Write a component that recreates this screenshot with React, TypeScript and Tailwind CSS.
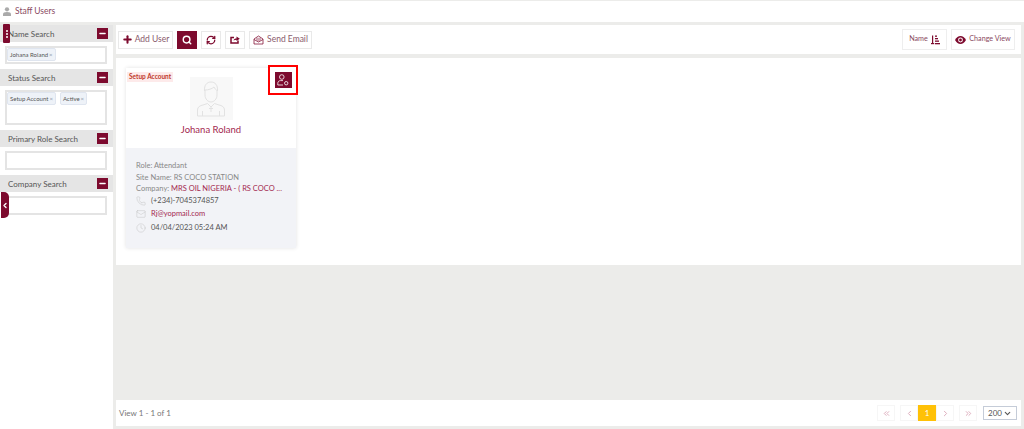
import React from "react";
import {
  ChevronDown,
  ChevronLeft,
  ChevronRight,
  ChevronsLeft,
  ChevronsRight,
  Clock,
  Mail,
  Minus,
  Phone,
  Plus,
  RefreshCw,
  Search,
} from "lucide-react";

const maroon = "text-[#7d0a2e]";

function Chip({ label }: { label: string }) {
  return (
    <span className="flex h-[13px] items-center gap-[1px] rounded-[2px] border border-[#dfe5ef] bg-[#eef2f8] px-[2px] text-[6px] text-[#555]">
      {label}
      <span className="text-[#8a94a6]">×</span>
    </span>
  );
}

function SearchGroup({
  title,
  boxClass,
  children,
}: {
  title: string;
  boxClass: string;
  children?: React.ReactNode;
}) {
  return (
    <div className="mb-[5px]">
      <div className="flex h-[17px] items-center justify-between bg-[#e5e5e5] pl-[8px] pr-[5px] text-[8px] text-[#555]">
        {title}
        <span className="flex h-[11px] w-[11px] items-center justify-center bg-[#7d0a2e]">
          <Minus size={9} strokeWidth={3.5} className="text-white" />
        </span>
      </div>
      <div className="pl-[5px] pr-[6px] pt-[4px]">
        <div
          className={`flex flex-wrap items-start gap-[4px] border-2 border-[#e4e4e4] bg-white p-[0px] ${boxClass}`}
        >
          {children}
        </div>
      </div>
    </div>
  );
}

function ToolButton({
  children,
  active,
  className = "",
}: {
  children: React.ReactNode;
  active?: boolean;
  className?: string;
}) {
  return (
    <div
      className={`flex h-[18px] items-center justify-center gap-[2px] border text-[8.5px] ${className} ${
        active
          ? "border-[#7d0a2e] bg-[#7d0a2e] text-white"
          : "border-[#e9e9e9] bg-white text-[#7d0a2e]"
      }`}
    >
      {children}
    </div>
  );
}

function PageButton({ children }: { children: React.ReactNode }) {
  return (
    <span className="flex h-[16px] w-[18px] items-center justify-center border border-[#f6f6f6] text-[#dba9b9]">
      {children}
    </span>
  );
}

function ShareBoxIcon() {
  return (
    <svg width="10" height="9" viewBox="0 0 10 9" fill="none">
      <path d="M4 2.5H1V8H8V5.5" stroke="currentColor" strokeWidth="1.5" />
      <path d="M3.5 5.5C4 4 5 3.5 6.5 3.5V1.5L9.8 3.8L6.5 6V4.8C5.5 4.8 4.5 5 3.5 5.5Z" fill="currentColor" />
    </svg>
  );
}

function EnvelopeIcon() {
  return (
    <svg width="11" height="10" viewBox="0 0 11 10" fill="none">
      <path d="M1 4L5.5 1L10 4V9H1V4Z" stroke="currentColor" strokeOpacity="0.75" />
      <path d="M1 4.5L5.5 7L10 4.5" stroke="currentColor" strokeOpacity="0.75" />
      <path d="M3 2.8H8V5L5.5 6.4L3 5Z" fill="currentColor" fillOpacity="0.35" />
    </svg>
  );
}

function SortIcon() {
  return (
    <svg width="9" height="10" viewBox="0 0 9 10" fill="currentColor">
      <rect x="1" y="0.5" width="1.2" height="8.5" />
      <rect x="0" y="8" width="3.2" height="1.2" />
      <rect x="4" y="0.5" width="2" height="1.3" />
      <rect x="4" y="3" width="3" height="1.3" />
      <rect x="4" y="5.5" width="4" height="1.3" />
      <rect x="4" y="8" width="5" height="1.3" />
    </svg>
  );
}

function EyeIcon() {
  return (
    <svg width="11" height="8" viewBox="0 0 11 8" className={maroon}>
      <path d="M0 4C1.5 1.4 3.4 0 5.5 0S9.5 1.4 11 4C9.5 6.6 7.6 8 5.5 8S1.5 6.6 0 4Z" fill="currentColor" />
      <circle cx="5.5" cy="4" r="2.4" fill="white" />
      <circle cx="5.5" cy="4" r="1.4" fill="currentColor" />
    </svg>
  );
}

function UserGearIcon() {
  return (
    <svg width="12" height="12" viewBox="0 0 12 12" fill="none" stroke="white" strokeWidth="0.8">
      <circle cx="4.8" cy="3" r="2.3" />
      <path d="M0.8 11V9.4C0.8 7.6 2 6.6 3.6 6.6H6" />
      <path d="M0.8 11H6" />
      <circle cx="9.2" cy="9.2" r="1.7" />
    </svg>
  );
}

function AvatarIcon() {
  return (
    <svg width="30" height="36" viewBox="0 0 30 36" fill="none" stroke="#e2e2e2" strokeWidth="1">
      <path d="M8.5 10C8 4 11 1 15 1S22 4 21.5 10" />
      <path d="M9 9C12 9 16 8 18 6C19 8 20 9 21 9.5V14C21 18 18 21 15 21S9 18 9 14V9Z" />
      <path d="M1.5 35V29C1.5 26 4 24.5 7 24L11.5 22.5L15 26L18.5 22.5L23 24C26 24.5 28.5 26 28.5 29V35Z" />
      <path d="M15 26V31M13 27.5H17M6.5 30V35M23.5 30V35" />
    </svg>
  );
}

export default function App() {
  return (
    <div
      className="relative flex h-[429px] w-[1024px] flex-col overflow-hidden bg-[#ececea] text-[#666]"
      style={{ fontFamily: "Lato, sans-serif" }}
    >
      {/* page title */}
      <div className="mt-px flex h-[21px] shrink-0 items-center gap-[4px] bg-white pl-[3px] text-[8.5px] text-[#8a4a62]">
        <svg width="8" height="9" viewBox="0 0 9 10" fill="#aaa">
          <circle cx="4.5" cy="2.6" r="2.4" />
          <path d="M0 10V8C0 6.5 1.5 5.6 4.5 5.6S9 6.5 9 8V10Z" />
        </svg>
        Staff Users
      </div>

      <div className="mt-[3px] flex min-h-0 flex-1 gap-[3px]">
        {/* filters */}
        <aside className="flex w-[113px] shrink-0 flex-col bg-white">
          <SearchGroup title="Name Search" boxClass="h-[18px]">
            <Chip label="Johana Roland" />
          </SearchGroup>
          <SearchGroup title="Status Search" boxClass="h-[35px]">
            <Chip label="Setup Account" />
            <Chip label="Active" />
          </SearchGroup>
          <SearchGroup title="Primary Role Search" boxClass="h-[19px]" />
          <SearchGroup title="Company Search" boxClass="h-[19px]" />
        </aside>

        <main className="flex min-w-0 flex-1 flex-col pr-[3px]">
          {/* toolbar */}
          <div className="flex h-[29px] shrink-0 items-center justify-between bg-white pl-[2px] pr-[6px]">
            <div className="flex items-center gap-[4px]">
              <ToolButton className="w-[55px]">
                <Plus size={11} strokeWidth={4.5} className="shrink-0" />
                <span className="text-[#8a5a6c]">Add User</span>
              </ToolButton>
              <ToolButton active className="w-[20px]">
                <Search size={10} strokeWidth={3.5} />
              </ToolButton>
              <ToolButton className="w-[20px]">
                <RefreshCw size={10} strokeWidth={3} />
              </ToolButton>
              <ToolButton className="w-[20px]">
                <ShareBoxIcon />
              </ToolButton>
              <ToolButton className="w-[63px] gap-[3px]">
                <EnvelopeIcon />
                <span className="text-[#8a5a6c]">Send Email</span>
              </ToolButton>
            </div>
            <div className="flex items-center gap-[4px] text-[7.2px] text-[#8a4a62]">
              <span className="flex h-[21px] w-[45px] items-center justify-center gap-[3px] border border-[#eee]">
                Name
                <span className={maroon}>
                  <SortIcon />
                </span>
              </span>
              <span className="flex h-[21px] w-[64px] items-center justify-center gap-[3px] border border-[#eee]">
                <EyeIcon />
                Change View
              </span>
            </div>
          </div>

          {/* card area */}
          <div className="mt-[4px] flex h-[207px] shrink-0 bg-white pl-[10px] pt-[10px]">
            <div className="flex h-[180px] w-[170px] flex-col shadow-[0_0_4px_rgba(0,0,0,0.12)]">
              <div className="relative flex h-[80px] shrink-0 flex-col items-center">
                <span className="absolute left-[1px] top-[4px] bg-[#fdeaea] px-[2px] text-[6.5px] font-bold leading-[10px] text-[#c0392b]">
                  Setup Account
                </span>
                <div className="absolute right-[-2px] top-[-3px] flex h-[30px] w-[30px] items-center justify-center border-2 border-[#ff0000] bg-white">
                  <span className="flex h-[16px] w-[17px] items-center justify-center bg-[#7d0a2e]">
                    <UserGearIcon />
                  </span>
                </div>
                <div className="mt-[9px] flex h-[43px] w-[43px] items-center justify-center bg-[#f8f8f8]">
                  <AvatarIcon />
                </div>
                <span className="mt-[3px] text-[9.5px] leading-[14px] text-[#a3284f]">
                  Johana Roland
                </span>
              </div>
              <div className="flex flex-1 flex-col bg-[#f2f3f7] px-[10px] pt-[12px] text-[7.5px] leading-[11.5px] text-[#888]">
                <div>Role: Attendant</div>
                <div>Site Name: RS COCO STATION</div>
                <div className="whitespace-nowrap">
                  Company:{" "}
                  <span className="text-[#a3284f]">
                    MRS OIL NIGERIA - ( RS COCO ...
                  </span>
                </div>
                <div className="flex h-[12px] items-center gap-[5px] text-[#555]">
                  <Phone size={10} strokeWidth={1} className="text-[#bbb]" />
                  (+234)-7045374857
                </div>
                <div className="mt-[1px] flex h-[13px] items-center gap-[5px] text-[#a3284f]">
                  <Mail size={10} strokeWidth={1} className="text-[#bbb]" />
                  Rj@yopmail.com
                </div>
                <div className="mt-[1px] flex h-[13px] items-center gap-[5px] text-[#555]">
                  <Clock size={10} strokeWidth={1} className="text-[#bbb]" />
                  04/04/2023 05:24 AM
                </div>
              </div>
            </div>
          </div>

          <div className="flex-1" />

          {/* footer */}
          <div className="mb-[3px] flex h-[26px] shrink-0 items-center justify-between bg-white pl-[3px] pr-[4px] text-[8px] text-[#777]">
            View 1 - 1 of 1
            <div className="flex items-center">
              <PageButton>
                <ChevronsLeft size={9} strokeWidth={2.5} />
              </PageButton>
              <span className="ml-[5px]" />
              <PageButton>
                <ChevronLeft size={9} strokeWidth={2.5} />
              </PageButton>
              <span className="flex h-[16px] w-[18px] items-center justify-center bg-[#ffc107] text-[8px] text-white">
                1
              </span>
              <PageButton>
                <ChevronRight size={9} strokeWidth={2.5} />
              </PageButton>
              <span className="ml-[5px]" />
              <PageButton>
                <ChevronsRight size={9} strokeWidth={2.5} />
              </PageButton>
              <span className="ml-[6px] flex h-[14px] w-[34px] items-center justify-between border border-[#c5ccd8] px-[4px] text-[8px] text-[#555]">
                200
                <ChevronDown size={9} strokeWidth={3} />
              </span>
            </div>
          </div>
        </main>
      </div>

      {/* sidebar handles */}
      <div className="absolute left-[3px] top-[24px] flex h-[19px] w-[7px] flex-col items-center justify-center gap-[1px] rounded-[1px] bg-[#7d0a2e]">
        <span className="h-[2px] w-[2px] rounded-full bg-white" />
        <span className="h-[2px] w-[2px] rounded-full bg-white" />
        <span className="h-[2px] w-[2px] rounded-full bg-white" />
      </div>
      <div className="absolute left-[1px] top-[192px] flex h-[26px] w-[8px] items-center justify-center rounded-r-[5px] bg-[#7d0a2e]">
        <ChevronLeft size={9} strokeWidth={4} className="text-white" />
      </div>
    </div>
  );
}
